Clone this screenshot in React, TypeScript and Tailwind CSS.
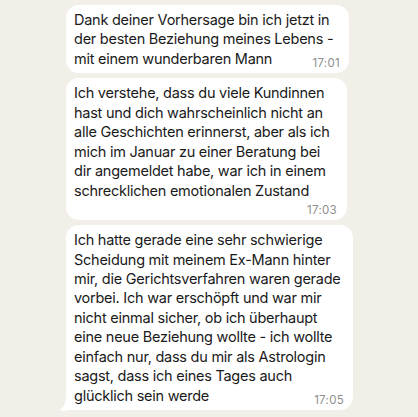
import React from "react";

type Msg = { lines: string[]; time: string; width: number; ownRow: boolean; tail?: boolean };

const messages: Msg[] = [
  {
    lines: [
      "Dank deiner Vorhersage bin ich jetzt in",
      "der besten Beziehung meines Lebens -",
      "mit einem wunderbaren Mann",
    ],
    time: "17:01",
    width: 283,
    ownRow: false,
  },
  {
    lines: [
      "Ich verstehe, dass du viele Kundinnen",
      "hast und dich wahrscheinlich nicht an",
      "alle Geschichten erinnerst, aber als ich",
      "mich im Januar zu einer Beratung bei",
      "dir angemeldet habe, war ich in einem",
      "schrecklichen emotionalen Zustand",
    ],
    time: "17:03",
    width: 281,
    ownRow: true,
  },
  {
    lines: [
      "Ich hatte gerade eine sehr schwierige",
      "Scheidung mit meinem Ex-Mann hinter",
      "mir, die Gerichtsverfahren waren gerade",
      "vorbei. Ich war erschöpft und war mir",
      "nicht einmal sicher, ob ich überhaupt",
      "eine neue Beziehung wollte - ich wollte",
      "einfach nur, dass du mir als Astrologin",
      "sagst, dass ich eines Tages auch",
      "glücklich sein werde",
    ],
    time: "17:05",
    width: 287,
    ownRow: false,
    tail: true,
  },
];

function Bubble({ m }: { m: Msg }) {
  const last = m.lines.length - 1;
  return (
    <div
      className={`relative rounded-[13px] bg-white pl-2 pr-[9px] pt-[5px] ${m.ownRow ? "pb-[3px]" : "pb-[5px]"}`}
      style={{ width: m.width }}
    >
      {m.tail && (
        <svg className="absolute -left-[7px] -bottom-[1px]" width="20" height="16" viewBox="0 0 20 16">
          <path d="M7 0 L20 0 L20 15 L12 15 C8 15.6 3 16 0 15.6 C4 13 7 9 7 0 Z" fill="#ffffff" />
        </svg>
      )}
      <div className="relative">
        {m.lines.map((l, i) =>
          i === last && !m.ownRow ? (
            <div key={i} className="flex items-end justify-between">
              <span className="whitespace-nowrap">{l}</span>
              <span className="text-[11.5px] leading-[14px] text-[#8e8e8e] tracking-[0.3px] translate-y-[2px]">
                {m.time}
              </span>
            </div>
          ) : (
            <div key={i} className="whitespace-nowrap">
              {l}
            </div>
          )
        )}
        {m.ownRow && (
          <div className="mt-[3px] flex justify-end text-[11.5px] leading-[14px] text-[#8e8e8e] tracking-[0.3px] pr-[1px]">
            {m.time}
          </div>
        )}
      </div>
    </div>
  );
}

export default function App() {
  return (
    <div
      className="w-[418px] h-[417px] overflow-hidden bg-[#f2efe9] text-[#1a1a1a] text-[14.5px] leading-[19.45px] tracking-[-0.25px]"
      style={{ fontFamily: "Inter, 'Liberation Sans', sans-serif" }}
    >
      <div className="flex flex-col gap-[5px] pl-[66px] pt-[5px]">
        {messages.map((m, i) => (
          <Bubble key={i} m={m} />
        ))}
      </div>
    </div>
  );
}
